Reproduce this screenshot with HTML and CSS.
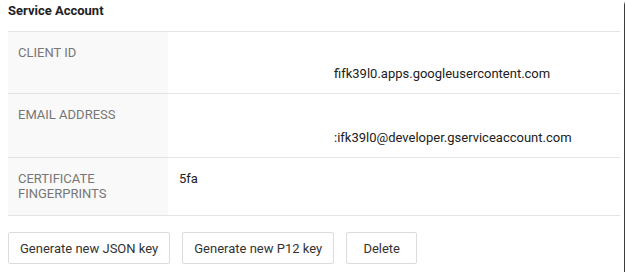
FILE: index.html
```html
<!DOCTYPE html>
<html>
<head>
    <title>Service Account</title>
    <link rel="stylesheet" href="styles.css">
</head>
<body>
    <div class="frame">
        <h2 class="title">Service Account</h2>
        <div class="details">
            <div class="row row-client">
                <div class="label">CLIENT ID</div>
                <div class="value value-bottom"><span class="redacted">fifk39l0.apps.googleusercontent.com</span></div>
            </div>
            <div class="row row-email">
                <div class="label">EMAIL ADDRESS</div>
                <div class="value value-bottom"><span class="redacted">:ifk39l0@developer.gserviceaccount.com</span></div>
            </div>
            <div class="row row-cert">
                <div class="label">CERTIFICATE<br>FINGERPRINTS</div>
                <div class="value">5fa</div>
            </div>
        </div>
        <div class="actions">
            <button class="button">Generate new JSON key</button>
            <button class="button">Generate new P12 key</button>
            <button class="button button-delete">Delete</button>
        </div>
    </div>
</body>
</html>
```

FILE: styles.css
```css
body {
    margin: 0;
    background-color: #fff;
    font-family: Roboto, 'Liberation Sans', Arial, sans-serif;
}
.frame {
    width: 612px;
    height: 272px;
    padding: 0 4px 0 8px;
    background-color: #fff;
    box-shadow: 3px 3px 2px #3c3c3c;
}
.title {
    margin: 0;
    padding-top: 3px;
    height: 28px;
    font-size: 13px;
    line-height: 16px;
    font-weight: bold;
    color: #212121;
}
.details {
    border-bottom: 1px solid #e5e5e5;
}
.row {
    display: flex;
    border-top: 1px solid #e5e5e5;
}
.row-client {
    height: 61px;
}
.row-email {
    height: 63px;
}
.row-cert {
    height: 57px;
}
.label {
    width: 140px;
    padding: 13px 10px 0 10px;
    background-color: #f9f9f9;
    font-size: 13px;
    line-height: 15px;
    color: #777;
}
.value {
    flex: 1;
    padding: 13px 10px 0 11px;
    font-size: 13px;
    line-height: 15px;
    color: #212121;
}
.value-bottom {
    align-self: flex-end;
    padding-top: 0;
    padding-bottom: 12px;
}
.redacted {
    /* the start of the id was blanked out in the screenshot */
    margin-left: 155px;
}
.actions {
    display: flex;
    gap: 12px;
    margin-top: 16px;
}
.button {
    height: 32px;
    min-width: 71px;
    padding: 0 11px;
    font-family: Roboto, 'Liberation Sans', Arial, sans-serif;
    font-size: 13px;
    color: #333;
    background-color: #fff;
    border: 1px solid #dcdcdc;
    border-radius: 2px;
}
```
